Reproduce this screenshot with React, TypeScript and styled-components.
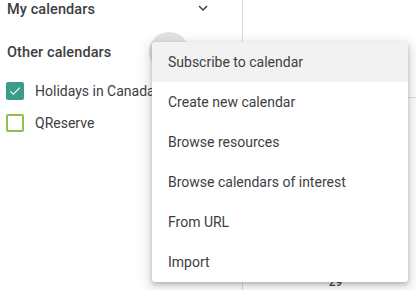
import { FC } from "react";
import styled, { createGlobalStyle } from "styled-components";

const GlobalStyle = createGlobalStyle`
  html, body {
    margin: 0;
    padding: 0;
    background: #fff;
    font-family: Roboto, "Liberation Sans", Arial, sans-serif;
    overflow: hidden;
  }
  * {
    box-sizing: border-box;
  }
`;

interface ICalendar {
  id: number;
  name: string;
  color: string;
  checked: boolean;
}

const calendars: ICalendar[] = [
  { id: 1, name: "Holidays in Canada", color: "#3b9c8c", checked: true },
  { id: 2, name: "QReserve", color: "#8dc14a", checked: false },
];

const menuItems = [
  "Subscribe to calendar",
  "Create new calendar",
  "Browse resources",
  "Browse calendars of interest",
  "From URL",
  "Import",
];

const Page = styled.div`
  display: flex;
  width: 416px;
  height: 290px;
  position: relative;
  overflow: hidden;
  color: #3c4043;
`;
const Sidebar = styled.aside`
  width: 243px;
  flex-shrink: 0;
  border-right: 1px solid #dadce0;
  overflow: hidden;
`;
// list is scrolled a little, so the first header is cut at the top
const SidebarList = styled.div`
  margin-top: -11px;
  display: flex;
  flex-direction: column;
`;
const SectionHeader = styled.div`
  height: 40px;
  display: flex;
  align-items: center;
  padding: 0 22px 0 7px;
  margin-bottom: 3px;
`;
const SectionTitle = styled.span`
  flex: 1;
  font-size: 14.5px;
  font-weight: 500;
  letter-spacing: 0.1px;
  color: #3c4043;
  white-space: nowrap;
`;
const IconButton = styled.button<{ $hover?: boolean }>`
  position: relative;
  width: 34px;
  height: 40px;
  border: none;
  padding: 0;
  background: none;
  display: flex;
  align-items: center;
  justify-content: center;
  cursor: pointer;
  &::before {
    content: "";
    position: absolute;
    left: 50%;
    top: 50%;
    width: 40px;
    height: 40px;
    margin: -20px 0 0 -20px;
    border-radius: 50%;
    background: ${(p) => (p.$hover ? "#e3e3e3" : "transparent")};
  }
  svg {
    position: relative;
    top: -1px;
  }
`;
const CalendarRow = styled.label`
  height: 32px;
  display: flex;
  align-items: center;
  gap: 11px;
  padding-left: 6px;
  font-size: 14px;
  color: #3c4043;
  white-space: nowrap;
`;
const Checkbox = styled.span<{ $color: string; $checked: boolean }>`
  width: 18px;
  height: 18px;
  flex-shrink: 0;
  border-radius: 2px;
  border: 2px solid ${(p) => p.$color};
  background: ${(p) => (p.$checked ? p.$color : "#fff")};
  display: flex;
  align-items: center;
  justify-content: center;
`;
const Main = styled.main`
  flex: 1;
  display: flex;
  flex-direction: column;
`;
const WeekRow = styled.div`
  height: 105px;
  border-bottom: 1px solid #dadce0;
`;
const DayCell = styled.div`
  padding: 176px 0 0 12px;
  text-align: center;
  font-size: 12px;
  line-height: 16px;
  font-weight: 500;
  color: #3c4043;
`;
const Menu = styled.ul`
  position: absolute;
  left: 152px;
  top: 42px;
  width: 256px;
  margin: 0;
  padding: 0;
  list-style: none;
  background: #fff;
  border-radius: 4px;
  overflow: hidden;
  box-shadow: 0 2px 4px rgba(60, 64, 67, 0.3), 0 4px 12px 4px rgba(60, 64, 67, 0.15);
`;
const MenuItem = styled.li<{ $active?: boolean }>`
  height: 40px;
  display: flex;
  align-items: center;
  padding-left: 16px;
  font-size: 14px;
  color: #3c4043;
  background: ${(p) => (p.$active ? "#f2f2f2" : "#fff")};
  cursor: pointer;
`;

const ChevronDown: FC = () => (
  <svg width="18" height="18" viewBox="0 0 24 24" fill="#3c4043">
    <path d="M16.59 8.59L12 13.17 7.41 8.59 6 10l6 6 6-6z" />
  </svg>
);
const ChevronUp: FC = () => (
  <svg width="18" height="18" viewBox="0 0 24 24" fill="#3c4043">
    <path d="M12 8l-6 6 1.41 1.41L12 10.83l4.59 4.58L18 14z" />
  </svg>
);
const Plus: FC = () => (
  <svg width="18" height="18" viewBox="0 0 24 24" fill="#3c4043">
    <path d="M19 13h-6v6h-2v-6H5v-2h6V5h2v6h6v2z" />
  </svg>
);
const Check: FC = () => (
  <svg width="16" height="16" viewBox="0 0 24 24" fill="#fff">
    <path d="M9 16.17L4.83 12l-1.42 1.41L9 19 21 7l-1.41-1.41z" />
  </svg>
);

const App: FC = () => {
  return (
    <Page>
      <GlobalStyle />
      <Sidebar>
        <SidebarList>
          <SectionHeader>
            <SectionTitle>My calendars</SectionTitle>
            <IconButton>
              <ChevronDown />
            </IconButton>
          </SectionHeader>
          <SectionHeader>
            <SectionTitle>Other calendars</SectionTitle>
            <IconButton $hover>
              <Plus />
            </IconButton>
            <IconButton>
              <ChevronUp />
            </IconButton>
          </SectionHeader>
          {calendars.map((c) => (
            <CalendarRow key={c.id}>
              <Checkbox $color={c.color} $checked={c.checked}>
                {c.checked && <Check />}
              </Checkbox>
              {c.name}
            </CalendarRow>
          ))}
        </SidebarList>
      </Sidebar>
      <Main>
        <WeekRow />
        <DayCell>29</DayCell>
      </Main>
      <Menu>
        {menuItems.map((item, i) => (
          <MenuItem key={item} $active={i === 0}>
            {item}
          </MenuItem>
        ))}
      </Menu>
    </Page>
  );
};

export default App;
